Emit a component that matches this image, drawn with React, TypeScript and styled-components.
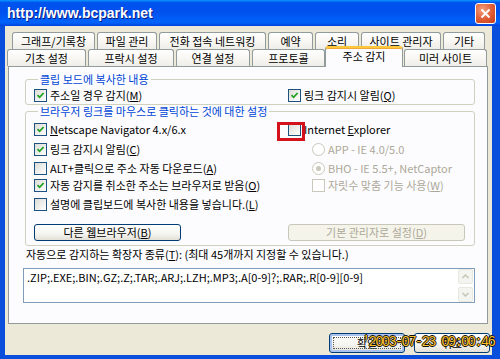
import React from 'react'
import styled, { createGlobalStyle, css } from 'styled-components'

const GlobalStyle = createGlobalStyle`
	html, body {
		margin: 0;
		padding: 0;
	}
	body {
		width: 500px;
		height: 359px;
		overflow: hidden;
		font-family: "Noto Sans CJK KR", "Noto Sans", sans-serif;
		font-size: 11px;
		color: #000;
	}
`

const Window = styled.div`
	position: relative;
	width: 500px;
	height: 359px;
	display: flex;
	flex-direction: column;
	background: #0a4fdb;
`

const TitleBar = styled.div`
	height: 26px;
	flex-shrink: 0;
	display: flex;
	align-items: center;
	justify-content: space-between;
	padding: 0 4px 0 7px;
	background: linear-gradient(#0997ff 0%, #0053ee 10%, #0050ee 45%, #0063fb 85%, #0058f0 92%, #0040d8 100%);
`

const TitleText = styled.span`
	font-family: "Liberation Sans", Arial, sans-serif;
	font-weight: bold;
	font-size: 14px;
	color: #fff;
	text-shadow: 1px 1px 0 #0a1a80;
`

const CloseButton = styled.div`
	width: 19px;
	height: 19px;
	border: 1px solid #fff;
	border-radius: 3px;
	background: radial-gradient(circle at 35% 30%, #f4a07e 0%, #e05a32 55%, #c2401c 100%);
	display: flex;
	align-items: center;
	justify-content: center;
	margin-top: 1px;
`

const Frame = styled.div`
	flex: 1;
	display: flex;
	flex-direction: column;
	background: #ece9d8;
	margin: 0 8px 4px 5px;
	padding: 6px 4px 0 3px;
`

const TabRow = styled.div<{ shift: number }>`
	display: flex;
	gap: 2px;
	height: 17px;
	margin-left: ${(p) => p.shift}px;
`

const Tab = styled.div<{ w: number, selected?: boolean }>`
	position: relative;
	box-sizing: border-box;
	width: ${(p) => p.w}px;
	height: 17px;
	flex-shrink: 0;
	border: 1px solid #919b9c;
	border-bottom: none;
	border-radius: 3px 3px 0 0;
	background: linear-gradient(#ffffff 0%, #f8f7f3 50%, #eeede8 100%);
	display: flex;
	align-items: center;
	justify-content: center;
	font-size: 11px;
	line-height: 11px;
	padding-top: 1px;
	white-space: nowrap;

	${(p) => p.selected && css`
		z-index: 1;
		height: 21px;
		margin: -3px -1px 0 -2px;
		background: #fcfcfe;
		border-top: 2px solid #ffc83c;
		padding-top: 0;
		padding-bottom: 3px;
		box-shadow: inset 0 1px 0 #f0a838;
	`}
`

const Panel = styled.div`
	box-sizing: border-box;
	width: 480px;
	height: 258px;
	border: 1px solid #919b9c;
	background: #fcfcfe;
	padding: 7px 12px 0 16px;
	display: flex;
	flex-direction: column;
`

const GroupBox = styled.fieldset<{ gapTop: number }>`
	margin: ${(p) => p.gapTop}px 0 0 0;
	padding: 1px 0 0 8px;
	border: 1px solid #d0d0bf;
	border-radius: 3px;
	min-width: 0;
`

const GroupLegend = styled.legend`
	color: #0046d5;
	font-size: 11px;
	line-height: 11px;
	padding: 0 2px;
	margin-left: 4px;
`

const OptionGrid = styled.div<{ rows: string }>`
	display: grid;
	grid-template-columns: 254px 1fr;
	grid-template-rows: ${(p) => p.rows};
	align-items: center;
`

const CheckRow = styled.label<{ indent?: number, disabled?: boolean }>`
	display: flex;
	align-items: center;
	gap: 3px;
	white-space: nowrap;
	font-size: 11px;
	line-height: 13px;
	margin-left: ${(p) => p.indent || 0}px;
	color: ${(p) => p.disabled ? '#aca899' : '#000'};
`

const Box = styled.span<{ disabled?: boolean }>`
	box-sizing: border-box;
	width: 13px;
	height: 13px;
	flex-shrink: 0;
	border: 1px solid ${(p) => p.disabled ? '#cac8bb' : '#1c5180'};
	background: ${(p) => p.disabled ? '#fff' : 'linear-gradient(135deg, #dcdcd7 0%, #ffffff 100%)'};
	display: flex;
	align-items: center;
	justify-content: center;
`

const Radio = styled.span`
	box-sizing: border-box;
	width: 13px;
	height: 13px;
	flex-shrink: 0;
	border-radius: 50%;
	border: 1px solid #cac8bb;
	background: #fff;
	display: flex;
	align-items: center;
	justify-content: center;
`

const RadioDot = styled.span`
	width: 5px;
	height: 5px;
	border-radius: 50%;
	background: #cac8bb;
`

const ButtonSlot = styled.div<{ w: number }>`
	margin-top: 9px;
	margin-bottom: 4px;
	width: ${(p) => p.w}px;
`

const XpButton = styled.div<{ disabled?: boolean, isDefault?: boolean, h: number }>`
	position: relative;
	box-sizing: border-box;
	width: 100%;
	height: ${(p) => p.h}px;
	border: 1px solid ${(p) => p.disabled ? '#c9c7ba' : '#003c74'};
	border-radius: 3px;
	background: ${(p) => p.disabled ? '#f5f4ea' : 'linear-gradient(#ffffff 0%, #f4f4f0 60%, #e3e0d6 100%)'};
	color: ${(p) => p.disabled ? '#aca899' : '#000'};
	display: flex;
	align-items: center;
	justify-content: center;
	font-size: 11px;
	line-height: 11px;
	white-space: nowrap;
	${(p) => p.isDefault && css`
		box-shadow: inset 0 0 0 2px #a9c2ee;
	`}
`

const FocusRing = styled.span`
	position: absolute;
	inset: 3px;
	border: 1px dotted #555;
`

const FieldLabel = styled.div`
	margin-top: 1px;
	line-height: 14px;
	font-size: 11px;
	white-space: nowrap;
	margin-left: 1px;
`

const TextBox = styled.div`
	box-sizing: border-box;
	margin: 7px 0 0 -2px;
	height: 35px;
	border: 1px solid #7f9db9;
	background: #fff;
	display: flex;
`

const TextContent = styled.div`
	flex: 1;
	padding: 2px 3px;
	font-size: 11px;
	line-height: 13px;
	white-space: nowrap;
`

const ScrollBar = styled.div`
	width: 15px;
	display: flex;
	flex-direction: column;
	justify-content: space-between;
	padding: 0 1px 0 0;
`

const ScrollArrow = styled.div`
	box-sizing: border-box;
	height: 15px;
	border: 1px solid #e8e7e0;
	border-radius: 2px;
	background: #f4f4f0;
	display: flex;
	align-items: center;
	justify-content: center;
`

const ButtonRow = styled.div`
	display: flex;
	justify-content: flex-end;
	gap: 9px;
	margin: 9px -2px 0 0;
`

const DialogButtonSlot = styled.div`
	width: 76px;
`

const Annotation = styled.div`
	position: absolute;
	left: 277px;
	top: 122px;
	width: 28px;
	height: 19px;
	box-sizing: border-box;
	border: 3px solid #d3121b;
`

const TimeStamp = styled.div`
	position: absolute;
	left: 362px;
	top: 335px;
	font-family: "Liberation Mono", monospace;
	font-size: 14px;
	line-height: 15px;
	letter-spacing: -1.8px;
	color: #fbc02a;
	text-shadow: 1px 0 0 #111, -1px 0 0 #111, 0 1px 0 #111, 0 -1px 0 #111;
	white-space: nowrap;
`

const Check = () => (
	<svg width='9' height='9' viewBox='0 0 9 9'>
		<path d='M1.5 4.2 L3.6 6.3 L7.6 2' stroke='#21a121' strokeWidth='1.8' fill='none'/>
	</svg>
)

const CheckBox = ({ checked, disabled, indent, children }: { checked?: boolean, disabled?: boolean, indent?: number, children: React.ReactNode }) => (
	<CheckRow indent={indent} disabled={disabled}>
		<Box disabled={disabled}>{checked && <Check/>}</Box>
		<span>{children}</span>
	</CheckRow>
)

const RadioOption = ({ checked, children }: { checked?: boolean, children: React.ReactNode }) => (
	<CheckRow indent={24} disabled>
		<Radio>{checked && <RadioDot/>}</Radio>
		<span>{children}</span>
	</CheckRow>
)

const Chevron = ({ up }: { up?: boolean }) => (
	<svg width='7' height='5' viewBox='0 0 7 5'>
		<path d={up ? 'M0.5 4 L3.5 1 L6.5 4' : 'M0.5 1 L3.5 4 L6.5 1'} stroke='#c8c6b8' strokeWidth='1.5' fill='none'/>
	</svg>
)

const topTabs = [
	{ label: '그래프/기록창', w: 83 },
	{ label: '파일 관리', w: 60 },
	{ label: '전화 접속 네트워킹', w: 107 },
	{ label: '예약', w: 45 },
	{ label: '소리', w: 44 },
	{ label: '사이트 관리자', w: 80 },
	{ label: '기타', w: 42 },
]

const bottomTabs = [
	{ label: '기초 설정', w: 79 },
	{ label: '프락시 설정', w: 86 },
	{ label: '연결 설정', w: 74 },
	{ label: '프로토콜', w: 73 },
	{ label: '주소 감지', w: 78, selected: true },
	{ label: '미러 사이트', w: 83 },
]

export default function App() {
	return (
		<>
			<GlobalStyle/>
			<Window>
				<TitleBar>
					<TitleText>http://www.bcpark.net</TitleText>
					<CloseButton>
						<svg width='11' height='11' viewBox='0 0 11 11'>
							<path d='M1.5 1.5 L9.5 9.5 M9.5 1.5 L1.5 9.5' stroke='#fff' strokeWidth='2'/>
						</svg>
					</CloseButton>
				</TitleBar>
				<Frame>
					<TabRow shift={4}>
						{topTabs.map((t) => <Tab key={t.label} w={t.w}>{t.label}</Tab>)}
					</TabRow>
					<TabRow shift={-1}>
						{bottomTabs.map((t) => <Tab key={t.label} w={t.w} selected={t.selected}>{t.label}</Tab>)}
					</TabRow>
					<Panel>
						<GroupBox gapTop={0}>
							<GroupLegend>클립 보드에 복사한 내용</GroupLegend>
							<OptionGrid rows='18px'>
								<CheckBox checked>주소일 경우 감지(<u>M</u>)</CheckBox>
								<CheckBox checked>링크 감지시 알림(<u>Q</u>)</CheckBox>
							</OptionGrid>
						</GroupBox>
						<GroupBox gapTop={1}>
							<GroupLegend>브라우저 링크를 마우스로 클릭하는 것에 대한 설정</GroupLegend>
							<OptionGrid rows='22px 19px 18px 17px 21px auto'>
								<CheckBox checked><u>N</u>etscape Navigator 4.x/6.x</CheckBox>
								<CheckBox>Internet <u>E</u>xplorer</CheckBox>
								<CheckBox checked>링크 감지시 알림(<u>C</u>)</CheckBox>
								<RadioOption>APP - IE 4.0/5.0</RadioOption>
								<CheckBox>ALT+클릭으로 주소 자동 다운로드(<u>A</u>)</CheckBox>
								<RadioOption checked>BHO - IE 5.5+, NetCaptor</RadioOption>
								<CheckBox checked>자동 감지를 취소한 주소는 브라우저로 받음(<u>O</u>)</CheckBox>
								<CheckBox disabled indent={24}>자릿수 맞춤 기능 사용(<u>W</u>)</CheckBox>
								<CheckBox>설명에 클립보드에 복사한 내용을 넣습니다.(<u>L</u>)</CheckBox>
								<span/>
								<ButtonSlot w={147}>
									<XpButton h={17}>다른 웹브라우저(<u>B</u>)</XpButton>
								</ButtonSlot>
								<ButtonSlot w={177}>
									<XpButton h={17} disabled>기본 관리자로 설정(<u>D</u>)</XpButton>
								</ButtonSlot>
							</OptionGrid>
						</GroupBox>
						<FieldLabel>자동으로 감지하는 확장자 종류(<u>T</u>): (최대 45개까지 지정할 수 있습니다.)</FieldLabel>
						<TextBox>
							<TextContent>.ZIP;.EXE;.BIN;.GZ;.Z;.TAR;.ARJ;.LZH;.MP3;.A[0-9]?;.RAR;.R[0-9][0-9]</TextContent>
							<ScrollBar>
								<ScrollArrow><Chevron up/></ScrollArrow>
								<ScrollArrow><Chevron/></ScrollArrow>
							</ScrollBar>
						</TextBox>
					</Panel>
					<ButtonRow>
						<DialogButtonSlot>
							<XpButton h={20} isDefault>확인<FocusRing/></XpButton>
						</DialogButtonSlot>
						<DialogButtonSlot>
							<XpButton h={20}>취소</XpButton>
						</DialogButtonSlot>
					</ButtonRow>
				</Frame>
				<Annotation/>
				<TimeStamp>'2003-07-23 09:00:46</TimeStamp>
			</Window>
		</>
	)
}
